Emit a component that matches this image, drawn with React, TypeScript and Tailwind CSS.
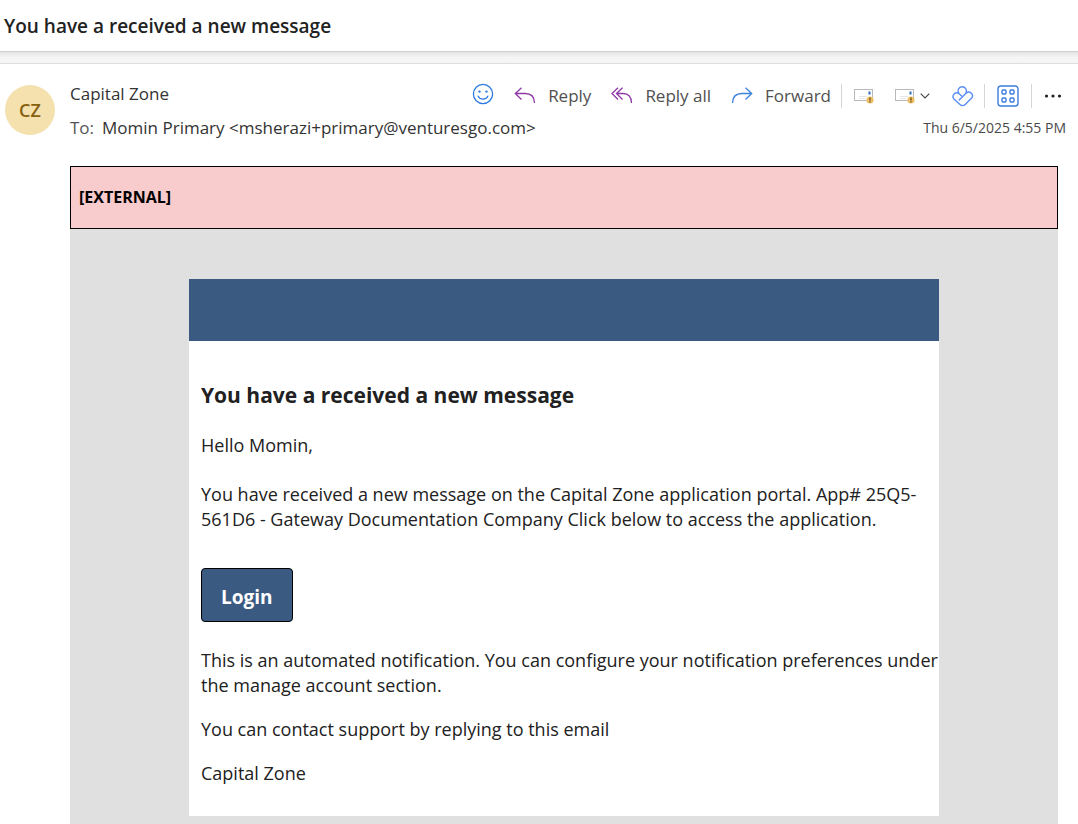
import type { ReactNode } from "react";

function SmileIcon() {
	return (
		<svg width="22" height="22" viewBox="0 0 22 22" fill="none" stroke="#2f7be0" strokeWidth="1.3" strokeLinecap="round">
			<circle cx="11" cy="11" r="9.6" />
			<path d="M6.2 13.2c2 3.8 7.600 3.800 9.600 0" />
			<circle cx="7.5" cy="8.6" r="1.2" fill="#2f7be0" stroke="none" />
			<circle cx="14.5" cy="8.6" r="1.2" fill="#2f7be0" stroke="none" />
		</svg>
	);
}

function ReplyIcon() {
	return (
		<svg width="22" height="18" viewBox="0 0 22 18" fill="none" stroke="#8f37a5" strokeWidth="1.3">
			<path d="M7.5 0.700L1.300 6.500l6.200 6M1.300 6.500H11c6 0 9.500 3.500 9.500 9.500" />
		</svg>
	);
}

function ReplyAllIcon() {
	return (
		<svg width="22" height="18" viewBox="0 0 22 18" fill="none" stroke="#8f37a5" strokeWidth="1.3">
			<path d="M7 0.700L1 6.500l6 6M11.500 0.700l-6 5.800 6 6M5.500 6.500H12c5.500 0 8.500 3.500 8.500 9.500" />
		</svg>
	);
}

function ForwardIcon() {
	return (
		<svg width="22" height="18" viewBox="0 0 22 18" fill="none" stroke="#3b83dd" strokeWidth="1.3">
			<path d="M14.500 0.700l6.200 5.800-6.200 6M20.700 6.500H11C5 6.500 1.500 10 1.500 16" />
		</svg>
	);
}

function MailAlertIcon() {
	return (
		<svg width="21" height="18" viewBox="0 0 21 18" fill="none">
			<rect x="0.5" y="2.5" width="18" height="11" fill="#fff" stroke="#b9b9b9" />
			<path d="M5 9.500h8M5 11.500h6" stroke="#e6e6e6" />
			<rect x="14.500" y="4.500" width="2" height="3" fill="#2f6db8" />
			<circle cx="16" cy="13" r="3.600" fill="#eebf66" />
			<path d="M16 10.600v3M16 14.300v1.200" stroke="#5b4315" strokeWidth="1.200" />
		</svg>
	);
}

function ChevronIcon() {
	return (
		<svg width="10" height="6" viewBox="0 0 10 6" fill="none" stroke="#444" strokeWidth="1.1">
			<path d="M0.700 0.700L5 5l4.300-4.300" />
		</svg>
	);
}

function LoopIcon() {
	return (
		<svg
			width="22"
			height="22"
			viewBox="0 0 22 22"
			fill="none"
			stroke="#5b8df5"
			strokeWidth="1.4"
			strokeLinecap="round"
			strokeLinejoin="round"
		>
			<path d="M6.700 8.200a4.200 4.200 0 1 1 7.300-0.400" />
			<path d="M7.200 15.100l7.200-7.200a3.700 3.700 0 0 1 5.200 5.200l-6.400 6.400a3.700 3.700 0 0 1-5.200 0L1.900 13.900a3.700 3.700 0 0 1 5.200-5.200l3.400 3.100" />
		</svg>
	);
}

function AppsIcon() {
	return (
		<svg width="22" height="22" viewBox="0 0 22 22" fill="none" stroke="#3a7fdc" strokeWidth="1.4">
			<rect x="1" y="1" width="20" height="20" rx="3" />
			<rect x="5" y="5" width="4" height="4" rx="1" />
			<rect x="13" y="5" width="4" height="4" rx="1" />
			<rect x="5" y="13" width="4" height="4" rx="1" />
			<rect x="13" y="13" width="4" height="4" rx="1" />
		</svg>
	);
}

function MoreIcon() {
	return (
		<svg width="18" height="4" viewBox="0 0 18 4" fill="#222">
			<circle cx="2.5" cy="2" r="1.6" />
			<circle cx="9" cy="2" r="1.6" />
			<circle cx="15.5" cy="2" r="1.6" />
		</svg>
	);
}

function ToolbarButton({ icon, label }: { icon: ReactNode; label: string }) {
	return (
		<button type="button" className="flex items-center gap-3 text-[17px] leading-6 text-[#505050]">
			{icon}
			{label}
		</button>
	);
}

function Divider() {
	return <span className="h-6 w-px bg-[#d6d6d6]" />;
}

function Toolbar() {
	return (
		<div className="mr-1 flex h-6 items-center">
			<div className="flex items-center gap-5">
				<button type="button" aria-label="React" className="pb-1">
					<SmileIcon />
				</button>
				<ToolbarButton icon={<ReplyIcon />} label="Reply" />
				<ToolbarButton icon={<ReplyAllIcon />} label="Reply all" />
				<ToolbarButton icon={<ForwardIcon />} label="Forward" />
			</div>
			<div className="ml-[10px] flex items-center gap-3">
				<Divider />
				<button type="button" aria-label="Report message">
					<MailAlertIcon />
				</button>
				<button type="button" aria-label="Report options" className="ml-2 flex items-center gap-1">
					<MailAlertIcon />
					<ChevronIcon />
				</button>
				<button type="button" aria-label="Loop" className="ml-[10px]">
					<LoopIcon />
				</button>
				<div className="flex items-center gap-3 -ml-[2px]">
					<Divider />
					<button type="button" aria-label="Apps">
						<AppsIcon />
					</button>
					<Divider />
				</div>
				<button type="button" aria-label="More actions">
					<MoreIcon />
				</button>
			</div>
		</div>
	);
}

function MessageHeader() {
	return (
		<header className="flex gap-[15px] pt-5 pr-3 pl-[5px]">
			<div className="mt-px flex size-[50px] shrink-0 items-center justify-center rounded-full bg-[#f5e1ae] text-lg font-semibold text-[#85600f]">
				CZ
			</div>
			<div className="flex-1">
				<div className="flex items-start justify-between">
					<span className="text-[17px] leading-5 text-[#333]">Capital Zone</span>
					<Toolbar />
				</div>
				<div className="mt-2 flex items-center justify-between">
					<p className="text-[17px] leading-6 text-[#333]">
						<span className="mr-2 text-[#555]">To:</span>
						Momin Primary &lt;msherazi+primary@venturesgo.com&gt;
					</p>
					<time className="text-sm text-[#4a4a4a]">Thu 6/5/2025 4:55 PM</time>
				</div>
			</div>
		</header>
	);
}

function EmailCard() {
	return (
		<article className="mx-auto max-w-[750px] bg-white text-lg leading-[25px] text-[#212121]">
			<div className="h-[62px] bg-[#3a5a82]" />
			<div className="pt-10 pb-[30px] pl-3">
				<h2 className="text-[21px] leading-7 font-bold">You have a received a new message</h2>
				<p className="mt-6">Hello Momin,</p>
				<p className="mt-6">
					You have received a new message on the Capital Zone application portal. App# 25Q5-561D6 - Gateway
					Documentation Company Click below to access the application.
				</p>
				<a
					href="#login"
					className="mt-9 inline-block rounded border border-black bg-[#3a5a82] px-[19px] pt-[14px] pb-[10px] text-[19px] leading-7 font-bold text-white"
				>
					Login
				</a>
				<p className="mt-[26px]">
					This is an automated notification. You can configure your notification preferences under the manage
					account section.
				</p>
				<p className="mt-[19px]">You can contact support by replying to this email</p>
				<p className="mt-[19px]">Capital Zone</p>
			</div>
		</article>
	);
}

export default function App() {
	return (
		<div className="flex min-h-screen flex-col bg-white font-['Open_Sans','Noto_Sans',sans-serif]">
			<h1 className="px-1 pt-3 pb-[11px] text-[19px] leading-7 font-semibold text-[#222]">
				You have a received a new message
			</h1>
			<div className="h-[13px] border-t border-b border-t-[#cfcfcf] border-b-[#dedede] bg-linear-to-b from-[#e4e4e4] to-[#f5f5f5] to-50%" />
			<MessageHeader />
			<main className="mt-[26px] mr-5 ml-[70px] flex-1 bg-[#e0e0e0]">
				<p className="border border-black bg-[#f8cbcc] px-2 py-[18px] text-base leading-[25px] font-bold text-black">
					[EXTERNAL]
				</p>
				<div className="pt-[50px] pb-2">
					<EmailCard />
				</div>
			</main>
		</div>
	);
}
